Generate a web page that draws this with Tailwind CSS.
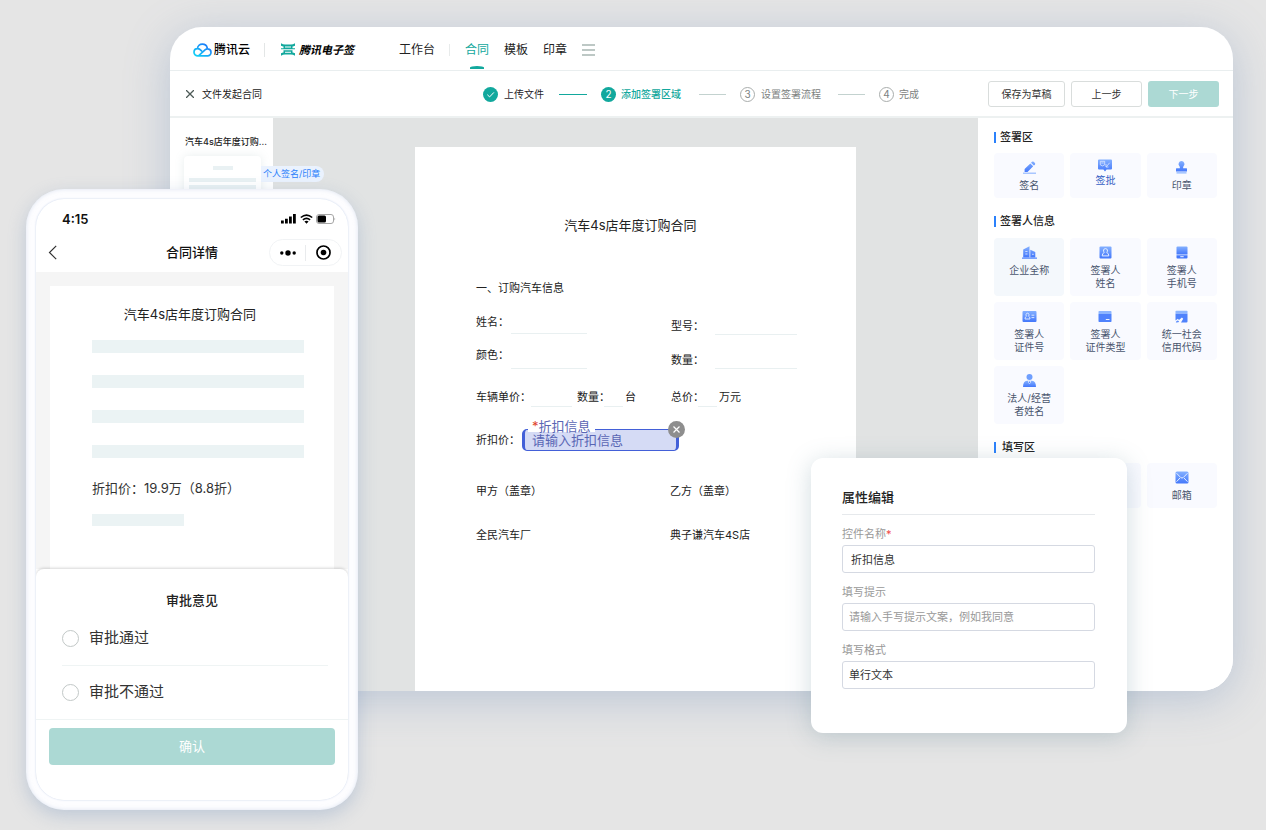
<!DOCTYPE html>
<html lang="zh-CN">
<head>
<meta charset="utf-8">
<meta name="viewport" content="width=device-width, initial-scale=1">
<title>腾讯电子签</title>
<script src="https://cdn.jsdelivr.net/npm/@tailwindcss/browser@4"></script>
</head>
<body class="relative flex min-h-screen bg-[#e5e5e5] pt-[27px] pr-[33px] pb-[139px] pl-[170px] font-['Inter','Noto_Sans_CJK_SC',sans-serif] text-[#1f2329]">

<svg class="absolute size-0" aria-hidden="true">
  <defs>
    <linearGradient id="blue" x1="0" y1="0" x2="0" y2="1"><stop offset="0" stop-color="#84b0ff"/><stop offset="1" stop-color="#4478fb"/></linearGradient>
    <linearGradient id="cloud" x1="0" y1="1" x2="1" y2="0"><stop offset="0" stop-color="#12d6f5"/><stop offset="1" stop-color="#1f6dfa"/></linearGradient>
  </defs>
</svg>

<!-- Desktop window -->
<div class="flex min-w-0 flex-1 flex-col overflow-hidden rounded-[32px] bg-white shadow-[0_8px_44px_rgba(110,140,185,0.36)]">
  <header class="flex h-11 shrink-0 items-center border-b border-[#e9eeef] pt-0.5 pl-[23px] text-xs leading-4 text-[#222]">
    <a href="#" class="flex items-center gap-0.5 font-medium text-black">
      <svg class="h-[14px] w-[19px]" viewBox="0 0 19 14" fill="none" stroke="url(#cloud)" stroke-width="1.700" stroke-linecap="round" stroke-linejoin="round"><path d="M5.500 12.800L12.300 6.700Q13.600 5.700 14.800 5.900C16.800 6.100 18 7.500 18 9.300C18 11.300 16.600 12.800 14.500 12.800H4.800C2.700 12.800 1 11.300 1 9.200C1 7.200 2.600 5.700 4.600 5.700C6 5.700 7 6.300 8.500 7.800M4.500 5.600C4.600 3 6.700 1.200 9.400 1.200C11.800 1.200 13.600 2.600 14.200 4.700"/></svg>
      <span class="whitespace-nowrap">腾讯云</span>
    </a>
    <span class="ml-[14px] h-3.5 w-px bg-[#e3e6e6]"></span>
    <a href="#" class="ml-4 flex items-center gap-1 text-[11px] font-bold text-black italic">
      <svg class="h-[13px] w-[14px]" viewBox="0 0 14 13" fill="#12a89d"><path d="M0 .3Q2 1.500 4 1.500H10Q12 1.500 14 .3V2.700Q12.800 3.500 11.500 3.500V5.300H14V6.300H0V5.300H2.500V3.500Q1.200 3.500 0 2.700Z"/><path d="M0 12.700Q2 11.500 4 11.500H10Q12 11.500 14 12.700V10.300Q12.800 9.500 11.500 9.500V7.300H2.500V9.500Q1.200 9.500 0 10.300Z"/><path d="M4 3.400H10V4.500H4ZM4 8.700H10V9.800H4Z" fill="#fff"/></svg>
      <span class="whitespace-nowrap">腾讯电子签</span>
    </a>
    <nav class="ml-[45px] flex items-center whitespace-nowrap">
      <a href="#">工作台</a>
      <span class="mx-[14px] h-3 w-px bg-[#e8ebeb]"></span>
      <a href="#" class="relative ml-px text-[#12a89d]">合同<span class="absolute top-6 left-[5px] h-[3px] w-3.5 rounded-t-[50%] bg-[#12a89d]"></span></a>
      <a href="#" class="ml-[15px]">模板</a>
      <a href="#" class="ml-[15px]">印章</a>
      <button type="button" aria-label="菜单" class="ml-[15px]"><svg class="h-3 w-[13px]" viewBox="0 0 13 12" stroke="#7d918c" stroke-width="1.200"><path d="M0 1H13M0 6H13M0 11H13"/></svg></button>
    </nav>
  </header>

  <div class="flex h-[47px] shrink-0 items-center border-b-2 border-[#edf1f1] pt-px pr-3.5 pl-4 text-[10px] leading-4 whitespace-nowrap">
    <div class="flex w-[297px] items-center gap-2 text-[#222]">
      <button type="button" aria-label="关闭"><svg class="size-2" viewBox="0 0 8 8" stroke="#4d5a57" stroke-width="1.300"><path d="M0 0L8 8M8 0L0 8"/></svg></button>
      <h2>文件发起合同</h2>
    </div>
    <ol class="flex items-center">
      <li class="flex items-center">
        <svg class="mr-1.5 size-[15px]" viewBox="0 0 15 15" fill="none"><circle cx="7.500" cy="7.500" r="7.500" fill="#12a89d"/><path d="M4.300 7.700L6.600 9.900L10.900 5.400" stroke="#fff" stroke-width="1"/></svg>
        <span>上传文件</span>
      </li>
      <li class="flex items-center font-medium text-[#12a89d]">
        <span class="mr-3.5 ml-[15px] w-7 border-t border-[#12a89d]"></span>
        <span class="mr-[5px] flex size-[15px] items-center justify-center rounded-full bg-[#12a89d] font-normal text-white">2</span>
        <span>添加签署区域</span>
      </li>
      <li class="flex items-center text-[#7d8281]">
        <span class="mr-3.5 ml-[18px] w-[27px] border-t border-[#c3d2cf]"></span>
        <span class="mr-1.5 flex size-[15px] items-center justify-center rounded-full border border-[#a9adac]">3</span>
        <span>设置签署流程</span>
      </li>
      <li class="flex items-center text-[#7d8281]">
        <span class="mr-3.5 ml-[17px] w-[27px] border-t border-[#c3d2cf]"></span>
        <span class="mr-[5px] flex size-[15px] items-center justify-center rounded-full border border-[#a9adac]">4</span>
        <span>完成</span>
      </li>
    </ol>
    <div class="ml-auto flex gap-1.5 text-[#333]">
      <button type="button" class="h-[26px] w-[77px] rounded-[3px] border border-[#d9dddc]">保存为草稿</button>
      <button type="button" class="h-[26px] w-[71px] rounded-[3px] border border-[#d9dddc]">上一步</button>
      <button type="button" class="h-[26px] w-[71px] rounded-[3px] bg-[#acd9d4] text-white">下一步</button>
    </div>
  </div>

  <div class="flex min-h-0 flex-1">
    <aside class="relative w-[103px] shrink-0 bg-white pt-4 pl-3.5">
      <p class="pl-px text-[9px] leading-4 font-medium whitespace-nowrap text-[#222]">汽车4s店年度订购...</p>
      <div class="mt-1.5 flex h-24 w-[77px] flex-col items-center rounded bg-white pt-2.5 shadow-[0_0_10px_rgba(130,160,160,0.18)]">
        <span class="h-1 w-5 bg-[#e9f1f3]"></span>
        <span class="mt-2 h-1 w-[67px] bg-[#e9f1f3]"></span>
        <span class="mt-[3px] h-1 w-[67px] bg-[#e9f1f3]"></span>
      </div>
      <span class="absolute top-12 left-[91px] flex h-4 items-center rounded-r-full bg-[#eaf2fe] pr-1 pl-0.5 text-[9px] whitespace-nowrap text-[#2b81fb]">个人签名/印章</span>
    </aside>

    <main class="min-w-0 flex-1 bg-[#e1e3e3] pt-[29px] pr-[122px] pl-[142px]">
      <article class="h-full bg-white pt-[68px] pl-[61px] text-[11px] leading-4 whitespace-nowrap text-[#222]">
        <h1 class="pr-[71px] text-center text-[13px] leading-5 text-[#222]">汽车4s店年度订购合同</h1>
        <p class="mt-[45px]">一、订购汽车信息</p>
        <div class="mt-[18px] grid grid-cols-[195px_1fr]">
          <div class="flex flex-col gap-[13px]">
            <div class="flex h-5 gap-0.5"><span>姓名：</span><span class="w-[76px] border-b border-[#e9f0f1]"></span></div>
            <div class="flex h-[22px] gap-0.5"><span>颜色：</span><span class="w-[76px] border-b border-[#e9f0f1]"></span></div>
          </div>
          <div class="flex flex-col gap-[17px] pt-1">
            <div class="flex h-[17px] gap-[11px]"><span>型号：</span><span class="w-[82px] border-b border-[#e9f0f1]"></span></div>
            <div class="flex h-[17px] gap-[11px]"><span>数量：</span><span class="w-[82px] border-b border-[#e9f0f1]"></span></div>
          </div>
        </div>
        <div class="mt-5 grid h-[18px] grid-cols-[101px_94px_1fr]">
          <div class="flex"><span>车辆单价：</span><span class="w-[41px] border-b border-[#e9f0f1]"></span></div>
          <div class="flex"><span class="w-[27px]">数量：</span><span class="mr-0.5 w-[19px] border-b border-[#e9f0f1]"></span><span>台</span></div>
          <div class="flex"><span class="w-[27px]">总价：</span><span class="mr-0.5 w-[19px] border-b border-[#e9f0f1]"></span><span>万元</span></div>
        </div>
        <div class="mt-[21px] flex h-[23px] items-center gap-0.5">
          <label for="discount">折扣价：</label>
          <div class="relative h-[22px] w-[157px] text-[13px] text-[#5966b4]">
            <input id="discount" type="text" placeholder="请输入折扣信息" class="block h-full w-full rounded-[5px] border-x-[3px] border-y border-[#4360d8] bg-[#d5dbf5] px-[7px] leading-5 outline-none placeholder:text-[#5966b4]">
            <span class="absolute -top-2.5 left-1.5 h-[13px] bg-white px-1 leading-[14px]"><span class="text-[#e0442c]">*</span>折扣信息</span>
            <button type="button" aria-label="删除" class="absolute -top-2 -right-1.5 flex size-[17px] items-center justify-center rounded-full bg-[#8e8e8e]"><svg class="size-[7px]" viewBox="0 0 7 7" stroke="#fff" stroke-width="1.200"><path d="M.5.5L6.500 6.500M6.500.5L.5 6.500"/></svg></button>
          </div>
        </div>
        <div class="mt-8 grid grid-cols-[194px_1fr] gap-y-7">
          <span>甲方（盖章）</span><span>乙方（盖章）</span>
          <span>全民汽车厂</span><span>典子谦汽车4S店</span>
        </div>
      </article>
    </main>

    <aside class="w-[255px] shrink-0 bg-white px-4 pt-[11px] text-[10px] leading-[13px] text-[#4a566e]">
      <section>
        <h3 class="flex items-center gap-1 text-[11px] leading-4 font-medium text-[#222]"><span class="h-[11px] w-0.5 bg-[#2b81fb]"></span>签署区</h3>
        <div class="mt-2 grid grid-cols-3 gap-1.5">
          <button type="button" class="flex h-[45px] flex-col items-center gap-[5px] rounded bg-[#f9faff] pt-2">
            <svg class="size-[13px]" viewBox="0 0 13 13" fill="url(#blue)"><path d="M1.600 8.100L7.300 2.400L10.200 5.300L4.500 11H1.600ZM8 1.700L9 .8Q9.900.1 10.700.8L11.900 2Q12.600 2.900 11.900 3.700L10.900 4.600Z"/><path d="M0 11.600H13V12.900H0Z" fill="#a9c6ff"/></svg>
            签名</button>
          <button type="button" class="flex h-[45px] flex-col items-center gap-0.5 rounded bg-[#f9faff] pt-1.5 text-[#3560c4]">
            <svg class="h-[13px] w-[14px]" viewBox="0 0 14 13"><path d="M1 .5H13Q14 .5 14 1.500V9.500Q14 10.500 13 10.500H8.600L7 12.600L5.400 10.500H1Q0 10.500 0 9.500V1.500Q0 .5 1 .5Z" fill="url(#blue)"/><path d="M2.300 2.300H6.700V5.800Q4.500 8 2.300 5.800ZM3.300 4H5.700M8.300 7.800L11.600 3.800M8 5V8H10.500" fill="none" stroke="#dfeaff" stroke-width=".8"/></svg>
            签批</button>
          <button type="button" class="flex h-[45px] flex-col items-center gap-[5px] rounded bg-[#f9faff] pt-2">
            <svg class="size-[13px]" viewBox="0 0 13 13" fill="url(#blue)"><path d="M6.500 0A3 3 0 0 1 8.500 5.200Q7.900 6.200 8.200 7.200H11.500Q12 7.200 12 7.700V10.500H1V7.700Q1 7.200 1.500 7.200H4.800Q5.100 6.200 4.500 5.200A3 3 0 0 1 6.500 0Z"/><path d="M1.500 11.200H11.500V12.500H1.500Z" fill="#8db6ff"/></svg>
            印章</button>
        </div>
      </section>
      <section class="mt-[15px]">
        <h3 class="flex items-center gap-1 text-[11px] leading-4 font-medium text-[#222]"><span class="h-[11px] w-0.5 bg-[#2b81fb]"></span>签署人信息</h3>
        <div class="mt-[9px] grid grid-cols-3 gap-1.5">
          <button type="button" class="flex h-[58px] flex-col items-center gap-[5px] rounded bg-[#f4f8fc] pt-2">
            <svg class="h-[13px] w-[15px]" viewBox="0 0 15 13"><path d="M1.200 3.500L7.500.3V11.500H1.200ZM8.300 3.800L13.300 6V11.500H8.300Z" fill="url(#blue)"/><path d="M0 11.500H15V12.800H0Z" fill="#5c8dfd"/><path d="M3.300 5.500H5.500M3.300 8H5.500M10 8.300H11.800" stroke="#e6efff" stroke-width=".8"/></svg>
            企业全称</button>
          <button type="button" class="flex h-[58px] flex-col items-center gap-[5px] rounded bg-[#f9faff] pt-2">
            <svg class="size-[13px]" viewBox="0 0 13 13"><rect x=".5" y=".5" width="12" height="12" rx="1" fill="url(#blue)"/><path d="M6.500 2.600A1.900 2.100 0 0 1 7.700 6.400Q9.800 7.200 9.800 9.900H3.200Q3.200 7.200 5.300 6.400A1.900 2.100 0 0 1 6.500 2.600Z" fill="none" stroke="#e6efff" stroke-width="1"/></svg>
            <span>签署人<br>姓名</span></button>
          <button type="button" class="flex h-[58px] flex-col items-center gap-[5px] rounded bg-[#f9faff] pt-2">
            <svg class="h-[13px] w-3" viewBox="0 0 12 13"><path d="M1.500.5H10.500Q11.500.5 11.500 1.500V8.500H.5V1.500Q.5.5 1.500.5Z" fill="url(#blue)"/><path d="M.5 9.200H11.500V11.500Q11.500 12.500 10.500 12.500H1.500Q.5 12.500.5 11.500Z" fill="#4478fb"/><path d="M4.300 10.700H7.700" stroke="#fff" stroke-width=".9"/></svg>
            <span>签署人<br>手机号</span></button>
          <button type="button" class="flex h-[58px] flex-col items-center gap-[5px] rounded bg-[#f9faff] pt-2">
            <svg class="h-[13px] w-[15px]" viewBox="0 0 15 13"><rect x=".5" y="1" width="14" height="11" rx="1" fill="url(#blue)"/><path d="M5.500 3.200A1.500 1.600 0 0 1 6.400 6.100Q8 6.700 8 9H3Q3 6.700 4.600 6.100A1.500 1.600 0 0 1 5.500 3.200ZM9.500 5.200H12.300M9.500 7.600H12.300" fill="none" stroke="#e6efff" stroke-width=".9"/></svg>
            <span>签署人<br>证件号</span></button>
          <button type="button" class="flex h-[58px] flex-col items-center gap-[5px] rounded bg-[#f9faff] pt-2">
            <svg class="h-[13px] w-[14px]" viewBox="0 0 14 13"><path d="M1.300 1H12.700Q13.500 1 13.500 1.800V4H.5V1.800Q.5 1 1.300 1Z" fill="#8db6ff"/><path d="M.5 4H13.500V11.200Q13.500 12 12.700 12H1.300Q.5 12 .5 11.200Z" fill="#4f82fc"/><path d="M7.800 9.500H11.500" stroke="#fff" stroke-width=".9"/></svg>
            <span>签署人<br>证件类型</span></button>
          <button type="button" class="flex h-[58px] flex-col items-center gap-[5px] rounded bg-[#f9faff] pt-2">
            <svg class="size-[13px]" viewBox="0 0 13 13"><path d="M1.300.7H11.700Q12.500.7 12.500 1.500V3.700H.5V1.500Q.5.7 1.300.7Z" fill="#8db6ff"/><path d="M.5 3.700H12.500V11.500Q12.500 12.500 11.500 12.500H6L8.200 8.700L6.900 7.500L4 10L2.800 8.700L.5 10.500Z" fill="#4f82fc"/><path d="M.8 12.500Q1.200 10.500 3 10.600L4.200 11.700Q3.500 12.700.8 12.500Z" fill="#5c8dfd"/></svg>
            <span>统一社会<br>信用代码</span></button>
          <button type="button" class="flex h-[58px] flex-col items-center gap-[5px] rounded bg-[#f9faff] pt-2">
            <svg class="size-[13px]" viewBox="0 0 13 13"><circle cx="6.500" cy="3" r="3" fill="#6f9ffe"/><path d="M0 13Q0 7.200 4 6.800H9Q13 7.200 13 13Z" fill="url(#blue)"/><path d="M4.800 6.800H8.200L7.500 9L6.500 10L5.500 9Z" fill="#dce8ff"/><path d="M6.500 7.200L7.200 8.200L6.500 9.200L5.800 8.200Z" fill="#4478fb"/></svg>
            <span>法人/经营<br>者姓名</span></button>
        </div>
      </section>
      <section class="mt-[15px]">
        <h3 class="flex items-center gap-1.5 text-[11px] leading-4 font-medium text-[#222]"><span class="h-[11px] w-0.5 bg-[#2b81fb]"></span>填写区</h3>
        <div class="mt-2 grid grid-cols-3 gap-1.5">
          <span class="h-[45px] rounded bg-[#f9faff]"></span>
          <span class="h-[45px] rounded bg-[#f9faff]"></span>
          <button type="button" class="flex h-[45px] flex-col items-center gap-[5px] rounded bg-[#f9faff] pt-2">
            <svg class="h-[13px] w-[14px]" viewBox="0 0 14 13"><rect x=".5" y=".5" width="13" height="12" rx="1.500" fill="url(#blue)"/><path d="M1.500 2.200L5.700 6.500Q7 7.600 8.300 6.500L12.500 2.200M1.500 10.700L5 7M12.500 10.700L9 7" fill="none" stroke="#e6efff" stroke-width="1"/></svg>
            邮箱</button>
        </div>
      </section>
    </aside>
  </div>
</div>

<!-- Property editor floating over the window -->
<form class="absolute top-[458px] left-[811px] w-[316px] rounded-xl bg-white pt-[29px] pr-8 pb-11 pl-[31px] text-[11px] leading-4 text-[#999] shadow-[0_4px_24px_rgba(90,130,145,0.28)]">
  <h2 class="border-b border-[#e6e9ec] pb-[7px] text-[13px] leading-5 font-medium text-[#222]">属性编辑</h2>
  <label for="name" class="mt-[11px] block">控件名称<span class="text-[#f04a4a]">*</span></label>
  <input id="name" type="text" value="折扣信息" class="mt-[3px] block h-7 w-full rounded-[3px] border border-[#d5d9e2] px-2 text-[#333] outline-none">
  <label for="hint" class="mt-[11px] block">填写提示</label>
  <input id="hint" type="text" placeholder="请输入手写提示文案，例如我同意" class="mt-[3px] block h-7 w-full rounded-[3px] border border-[#d5d9e2] px-1.5 outline-none placeholder:text-[#999]">
  <label for="format" class="mt-[11px] block">填写格式</label>
  <select id="format" class="mt-[3px] block h-7 w-full appearance-none rounded-[3px] border border-[#d5d9e2] px-1.5 text-[#333] outline-none"><option>单行文本</option></select>
</form>

<!-- Phone floating over the window -->
<div class="absolute top-[189px] left-[26px] w-[332px] rounded-[38px] bg-[#fdfdff] p-2.5 shadow-[0_6px_18px_rgba(110,140,185,0.32),inset_0_0_4px_rgba(195,207,228,0.55)]">
  <div class="overflow-hidden rounded-[28px] bg-white shadow-[0_0_2px_rgba(190,205,230,0.9)]">
    <div class="flex h-[38px] items-center justify-between pt-px pr-3 pl-[26px]">
      <span class="text-[13px] leading-4 font-semibold text-[#111]">4:15</span>
      <div class="flex items-center gap-[3px]">
        <svg class="h-[11px] w-4" viewBox="0 0 16 11"><path d="M0 7.500H2.800V10.500H0ZM4 5.800H6.800V10.500H4ZM8 3.600H10.800V10.500H8ZM12 1H14.800V10.500H12Z"/></svg>
        <svg class="h-[10px] w-[13px]" viewBox="0 0 13 10"><path d="M.8 3.500Q6.500-1.300 12.200 3.500M2.900 5.800Q6.500 2.800 10.100 5.800" fill="none" stroke="#000" stroke-width="1.600"/><path d="M4.400 7.500Q6.500 5.800 8.600 7.500L6.500 9.800Z"/></svg>
        <svg class="h-[10px] w-5" viewBox="0 0 20 10"><rect x=".5" y=".5" width="17" height="9" rx="2.500" fill="none" stroke="#a6a6a6"/><rect x="1.500" y="1.500" width="8.500" height="7" rx="1.500"/><path d="M18.500 3.500Q20 5 18.500 6.500Z" fill="#999"/></svg>
      </div>
    </div>
    <div class="grid h-[35px] grid-cols-[1fr_auto_1fr] items-start">
      <button type="button" aria-label="返回" class="ml-3 justify-self-start pt-2"><svg class="h-[15px] w-[9px]" viewBox="0 0 9 15" fill="none" stroke="#333" stroke-width="1.200"><path d="M8.200.8L1.500 7.500L8.200 14.200"/></svg></button>
      <h2 class="pt-[5px] text-[13px] leading-5 font-medium text-[#111]">合同详情</h2>
      <div class="mt-0.5 mr-1.5 flex h-[27px] w-[73px] items-center justify-self-end rounded-full border border-[#f1f3f5]">
        <button type="button" aria-label="更多" class="flex flex-1 justify-center"><svg class="h-[6px] w-4" viewBox="0 0 16 6"><circle cx="1.800" cy="3" r="1.700"/><circle cx="8" cy="3" r="2.700"/><circle cx="14.200" cy="3" r="1.700"/></svg></button>
        <span class="h-4 w-px bg-[#e9ebed]"></span>
        <button type="button" aria-label="关闭" class="flex flex-1 justify-center"><svg class="size-[15px]" viewBox="0 0 15 15"><circle cx="7.500" cy="7.500" r="6.500" fill="none" stroke="#000" stroke-width="1.700"/><circle cx="7.500" cy="7.500" r="2.800"/></svg></button>
      </div>
    </div>
    <div class="bg-[#f5f5f5] px-3.5 pt-3.5">
      <div class="bg-white px-[42px] pt-[18px] pb-[43px] text-[13px] leading-5 text-[#222]">
        <h3 class="-mr-3 -ml-4 text-center">汽车4s店年度订购合同</h3>
        <div class="mt-4 -mr-3 flex flex-col gap-[22px] *:h-[13px] *:bg-[#ebf3f4]"><span></span><span></span><span></span><span></span></div>
        <p class="mt-5 whitespace-nowrap text-[#333]">折扣价：19.9万（8.8折）</p>
        <div class="mt-4 h-3 w-[92px] bg-[#ebf3f4]"></div>
      </div>
    </div>
    <div class="relative rounded-t-lg bg-white pt-[21px] pb-[35px] shadow-[0_-1px_3px_rgba(0,0,0,0.16)]">
      <h3 class="text-center text-[13px] leading-5 font-medium text-[#222]">审批意见</h3>
      <div class="px-[26px] text-[15px] leading-5 text-[#333]">
        <label class="mr-[-6px] flex items-center gap-[10px] border-b border-[#eff4f4] pt-[18px] pb-[17px]"><input type="radio" name="opinion" class="size-[17px] appearance-none rounded-full border border-[#c2c8c7] checked:border-[5px] checked:border-[#12a89d]">审批通过</label>
        <label class="flex items-center gap-[10px] pt-4 pb-[17px]"><input type="radio" name="opinion" class="size-[17px] appearance-none rounded-full border border-[#c2c8c7] checked:border-[5px] checked:border-[#12a89d]">审批不通过</label>
      </div>
      <div class="border-t border-[#eff4f4] px-[13px] pt-2">
        <button type="button" class="h-[37px] w-full rounded bg-[#acd9d4] text-[13px] text-white">确认</button>
      </div>
    </div>
  </div>
</div>
</body>
</html>
